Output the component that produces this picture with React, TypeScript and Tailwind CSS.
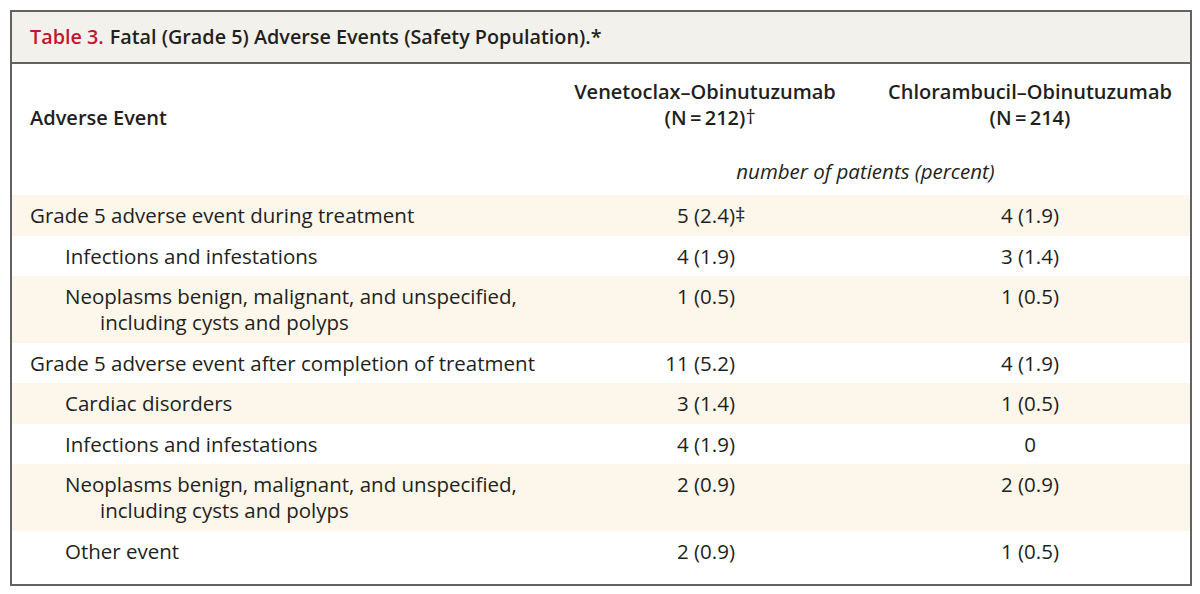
import React from "react";

type Row = {
  label: string;
  label2?: string;
  indent: boolean;
  a: string;
  aMark?: string;
  b: string;
  band: boolean;
};

const rows: Row[] = [
  { label: "Grade 5 adverse event during treatment", indent: false, a: "5 (2.4)", aMark: "‡", b: "4 (1.9)", band: true },
  { label: "Infections and infestations", indent: true, a: "4 (1.9)", b: "3 (1.4)", band: false },
  { label: "Neoplasms benign, malignant, and unspecified,", label2: "including cysts and polyps", indent: true, a: "1 (0.5)", b: "1 (0.5)", band: true },
  { label: "Grade 5 adverse event after completion of treatment", indent: false, a: "11 (5.2)", b: "4 (1.9)", band: false },
  { label: "Cardiac disorders", indent: true, a: "3 (1.4)", b: "1 (0.5)", band: true },
  { label: "Infections and infestations", indent: true, a: "4 (1.9)", b: "0", band: false },
  { label: "Neoplasms benign, malignant, and unspecified,", label2: "including cysts and polyps", indent: true, a: "2 (0.9)", b: "2 (0.9)", band: true },
  { label: "Other event", indent: true, a: "2 (0.9)", b: "1 (0.5)", band: false },
];

export default function App() {
  return (
    <div className="w-[1200px] h-[594px] bg-white pt-[10px] pl-[10px] text-[#231f20]" style={{ fontFamily: '"Open Sans", "Noto Sans", sans-serif' }}>
      <div className="w-[1182px] h-[576px] border-2 border-[#626262] flex flex-col">
        <div className="h-[52px] bg-[#f3f1ec] border-b-2 border-[#626262] flex items-center pl-[18px] text-[19.8px] font-semibold">
          <span className="text-[#c3172f]">Table 3.</span>
          <span className="ml-[6px]">Fatal (Grade 5) Adverse Events (Safety Population).*</span>
        </div>
        <div className="grid grid-cols-[528px_296px_320px] gap-x-[17px] pt-[15px] pb-[11px] text-[20px] leading-[26px]">
          <div className="flex items-end pl-[18px] font-semibold">Adverse Event</div>
          <div className="text-center font-semibold">
            <div>Venetoclax–Obinutuzumab</div>
            <div>
              <span className="relative">
                (N{"\u2009"}={"\u2009"}212)
                <span className="absolute left-full top-0 font-normal">†</span>
              </span>
            </div>
          </div>
          <div className="text-center font-semibold">
            <div>Chlorambucil–Obinutuzumab</div>
            <div>(N{"\u2009"}={"\u2009"}214)</div>
          </div>
          <div></div>
          <div className="col-span-2 text-center italic mt-[27px] pr-[16px] text-[20.5px]">number of patients (percent)</div>
        </div>
        {rows.map((r, i) => (
          <div
            key={i}
            className={`grid grid-cols-[528px_296px_320px] gap-x-[17px] py-[7.25px] text-[20.5px] leading-[26px] ${r.band ? "bg-[#fdf6ea]" : "bg-white"}`}
          >
            <div className={r.indent ? "pl-[53px]" : "pl-[18px]"}>
              <div className="whitespace-nowrap">{r.label}</div>
              {r.label2 && <div className="pl-[35px] whitespace-nowrap">{r.label2}</div>}
            </div>
            <div className="text-right pr-[118px]">
              <span className="relative">
                {r.a}
                {r.aMark && <span className="absolute left-full top-0">{r.aMark}</span>}
              </span>
            </div>
            <div className="text-center">{r.b}</div>
          </div>
        ))}
      </div>
    </div>
  );
}
